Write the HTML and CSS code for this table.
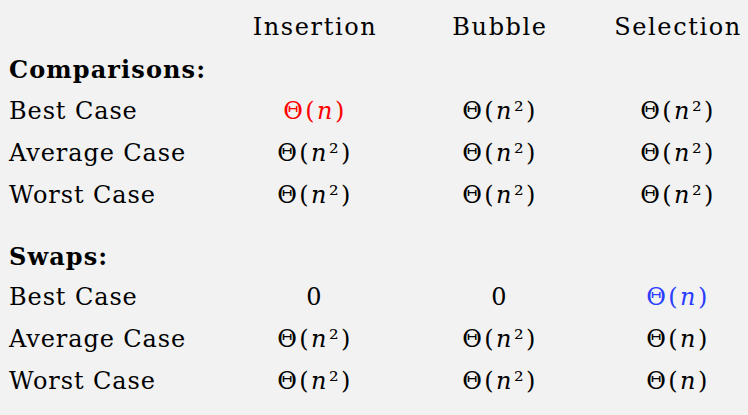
FILE: index.html
```html
<!DOCTYPE html>
<html>
<head>
<meta charset="utf-8">
<link rel="stylesheet" href="styles.css">
</head>
<body>
<div class="table">
  <div class="row">
    <div class="label"></div>
    <div class="cell title">Insertion</div>
    <div class="cell title">Bubble</div>
    <div class="cell title">Selection</div>
  </div>
  <div class="row"><div class="label head">Comparisons:</div></div>
  <div class="row">
    <div class="label">Best Case</div>
    <div class="cell red">Θ(<i>n</i>)</div>
    <div class="cell">Θ(<i>n</i>²)</div>
    <div class="cell">Θ(<i>n</i>²)</div>
  </div>
  <div class="row">
    <div class="label">Average Case</div>
    <div class="cell">Θ(<i>n</i>²)</div>
    <div class="cell">Θ(<i>n</i>²)</div>
    <div class="cell">Θ(<i>n</i>²)</div>
  </div>
  <div class="row">
    <div class="label">Worst Case</div>
    <div class="cell">Θ(<i>n</i>²)</div>
    <div class="cell">Θ(<i>n</i>²)</div>
    <div class="cell">Θ(<i>n</i>²)</div>
  </div>
  <div class="row section"><div class="label head">Swaps:</div></div>
  <div class="row">
    <div class="label">Best Case</div>
    <div class="cell">0</div>
    <div class="cell">0</div>
    <div class="cell blue">Θ(<i>n</i>)</div>
  </div>
  <div class="row">
    <div class="label">Average Case</div>
    <div class="cell">Θ(<i>n</i>²)</div>
    <div class="cell">Θ(<i>n</i>²)</div>
    <div class="cell">Θ(<i>n</i>)</div>
  </div>
  <div class="row">
    <div class="label">Worst Case</div>
    <div class="cell">Θ(<i>n</i>²)</div>
    <div class="cell">Θ(<i>n</i>²)</div>
    <div class="cell">Θ(<i>n</i>)</div>
  </div>
</div>
</body>
</html>
```

FILE: styles.css
```css
html, body {
  margin: 0;
  background: #f2f2f2;
  overflow: hidden;
}
body {
  font-family: "DejaVu Serif", "Liberation Serif", serif;
  font-size: 24px;
  color: #000;
  padding: 6px 0 0 9px;
}
.table {
  display: flex;
  flex-direction: column;
}
.row {
  display: grid;
  grid-template-columns: 231px 150px 220px 136px;
  height: 42px;
  align-items: center;
  white-space: nowrap;
}
.row.section {
  margin-top: 20px;
  height: 40px;
}
.label {
  letter-spacing: 0.9px;
}
.label.head {
  font-weight: bold;
  letter-spacing: 1.1px;
}
.cell {
  text-align: center;
  letter-spacing: 2.4px;
}
.cell.title {
  letter-spacing: 1.6px;
}
.red { color: #ff0000; }
.blue { color: #2b3dff; }
```
